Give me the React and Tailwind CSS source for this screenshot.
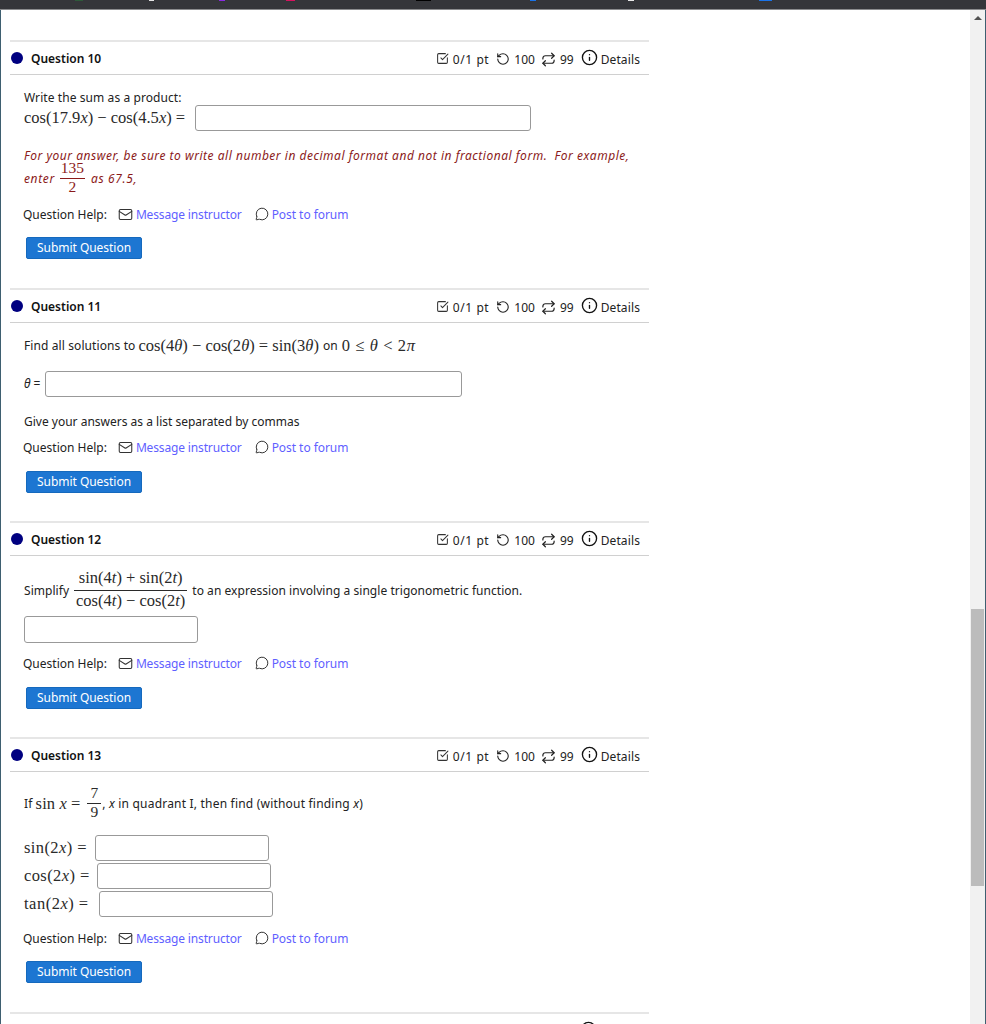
import React from "react";
import { SquareCheckBig, RotateCcw, Repeat, Info, Mail, MessageCircle } from "lucide-react";

const M = ({ children, className = "" }) => (
  <span className={`whitespace-nowrap font-['Liberation_Serif',serif] text-[16.5px] text-[#2a2a2a] ${className}`}>{children}</span>
);
const V = ({ children }) => <i className="font-['Liberation_Serif',serif]">{children}</i>;

const Frac = ({ top, bottom, size = "text-[15.5px]", numClass = "px-[1px] pb-[3px]", denClass = "px-[1px] pt-[1px]", className = "" }) => (
  <span className={`inline-flex flex-col items-center whitespace-nowrap font-['Liberation_Serif',serif] ${size} leading-[14px] ${className}`}>
    <span className={numClass}>{top}</span>
    <span className={`w-full border-t border-current text-center ${denClass}`}>{bottom}</span>
  </span>
);

const Field = ({ className }) => (
  <div className={`h-[26px] rounded-[3px] border border-[#999] bg-white ${className}`} />
);

const Help = ({ className = "" }) => (
  <div className={`flex h-5 items-center pl-[13px] text-[12px] ${className}`}>
    <span className="text-[#222]">Question Help:</span>
    <Mail size={15} strokeWidth={1.7} className="ml-[11px] -mt-[2px] text-[#333]" />
    <a className="ml-[3px] tracking-[-0.15px] text-[#5f5fff]">Message instructor</a>
    <MessageCircle size={14} strokeWidth={1.7} className="ml-[13px] -mt-[2px] text-[#333]" />
    <a className="ml-[3px] tracking-[-0.05px] text-[#5f5fff]">Post to forum</a>
  </div>
);

const Submit = ({ className = "" }) => (
  <div className={`ml-[16px] flex h-[22px] w-[116px] items-center justify-center rounded-[2px] border border-[#1569bd] bg-[#1d76d2] text-[12px] tracking-[-0.03px] text-white ${className}`}>
    Submit Question
  </div>
);

const Header = ({ n }) => (
  <div className="flex h-[35px] items-center border-t-2 border-b border-t-[#e6e6e6] border-b-[#d0d0d0] text-[12px] text-[#222]">
    <span className="ml-[1px] h-[12px] w-[12px] rounded-full bg-[#000080]" />
    <span className="ml-[8px] mt-[1px] font-semibold text-[#111]">Question {n}</span>
    <div className="ml-auto flex items-center pr-[9px]">
      <SquareCheckBig size={13} strokeWidth={1.9} className="mt-[1px] text-[#333]" />
      <span className="ml-[4px] mt-[3px] tracking-[0.6px]">0/1 pt</span>
      <RotateCcw size={14} strokeWidth={1.9} className="ml-[7px] mt-[1px] text-[#222]" />
      <span className="ml-[4px] mt-[3px]">100</span>
      <Repeat size={15} strokeWidth={1.9} className="ml-[6px] mt-[2px] text-[#222]" />
      <span className="ml-[4px] mt-[3px]">99</span>
      <Info size={17} strokeWidth={1.9} className="ml-[7px] -mt-[2px] text-[#111]" />
      <span className="ml-[3px] mt-[4px] tracking-[0.12px]">Details</span>
    </div>
  </div>
);

export default function App() {
  return (
    <div className="flex h-[1024px] w-[986px] flex-col overflow-hidden bg-white font-['Noto_Sans','Open_Sans',sans-serif] text-[12px] text-[#222]">
      <div className="relative h-[10px] shrink-0 border-b border-[#8b8c8e] bg-[#35363a]">
        <span className="absolute left-[75px] top-0 h-[1px] w-[8px] bg-[#2e5a3a]" />
        <span className="absolute left-[149px] top-0 h-[1px] w-[5px] bg-[#e4e4e4]" />
        <span className="absolute left-[219px] top-0 h-[1px] w-[6px] bg-[#8a2be2]" />
        <span className="absolute left-[286px] top-0 h-[1px] w-[9px] bg-[#d6135f]" />
        <span className="absolute left-[416px] top-0 h-[1px] w-[15px] bg-black" />
        <span className="absolute left-[530px] top-0 h-[1px] w-[6px] bg-[#1a73e8]" />
        <span className="absolute left-[628px] top-0 h-[1px] w-[6px] bg-[#e8e8e8]" />
        <span className="absolute left-[759px] top-0 h-[1px] w-[13px] bg-[#1a73e8]" />
      </div>
      <div className="flex min-h-0 flex-1">
        <div className="w-[1px] shrink-0 bg-[#3e5f70]" />
        <main className="min-w-0 flex-1 pl-[9px] pt-[30px]">
          <div className="w-[639px]">
            {/* Question 10 */}
            <Header n={10} />
            <div className="pb-[29px] pt-[15px]">
              <div className="flex h-4 items-center pl-[14px] tracking-[0.08px]">Write the sum as a product:</div>
              <div className="-mt-[1px] flex h-[26px] items-center pl-[14px]">
                <M className="w-[171px]">cos(17.9<V>x</V>) − cos(4.5<V>x</V>) =</M>
                <Field className="w-[336px]" />
              </div>
              <div className="mt-[18px] flex h-[14px] items-center whitespace-nowrap pl-[14px] italic tracking-[0.52px] text-[#8b1a1a]">
                For your answer, be sure to write all number in decimal format and not in fractional form.&nbsp; For example,
              </div>
              <div className="flex h-[32px] items-center pl-[14px] italic tracking-[0.62px] text-[#8b1a1a]">
                enter
                <Frac top="135" bottom="2" className="ml-[5px] mr-[6px] -mt-[4px] not-italic tracking-normal" />
                as 67.5,
              </div>
              <Help className="mt-[10px]" />
              <Submit className="mt-[12px]" />
            </div>

            {/* Question 11 */}
            <Header n={11} />
            <div className="pb-[28px] pt-[15px]">
              <div className="flex h-4 items-center pl-[14px] tracking-[0.1px]">
                <span>Find all solutions to</span>
                <M className="ml-[3px] tracking-normal">cos(4<V>θ</V>) − cos(2<V>θ</V>) = sin(3<V>θ</V>)</M>
                <span className="ml-[4px]">on</span>
                <M className="ml-[4px] tracking-[0.6px]">0 ≤ <V>θ</V> &lt; 2<V>π</V></M>
              </div>
              <div className="mt-[17px] flex h-[26px] items-center pl-[14px]">
                <span className="w-[21px]"><i>θ</i>&nbsp;=</span>
                <Field className="w-[417px]" />
              </div>
              <div className="mt-[17px] flex h-4 items-center pl-[14px]">Give your answers as a list separated by commas</div>
              <Help className="mt-[8px]" />
              <Submit className="mt-[13px]" />
            </div>

            {/* Question 12 */}
            <Header n={12} />
            <div className="pb-[28px] pt-[12px]">
              <div className="flex h-[45px] items-center pl-[14px] tracking-[0.04px]">
                Simplify
                <Frac
                  top={<>sin(4<V>t</V>) + sin(2<V>t</V>)</>}
                  bottom={<>cos(4<V>t</V>) − cos(2<V>t</V>)</>}
                  size="text-[16.5px]"
                  numClass="px-[2px] pb-[5px]"
                  denClass="px-[2px] pt-[3px]"
                  className="ml-[5px] mr-[5px] -mt-[2px] tracking-normal text-[#2a2a2a]"
                />
                to an expression involving a single trigonometric function.
              </div>
              <Field className="ml-[14px] mt-[3px] h-[27px] w-[174px]" />
              <Help className="mt-[11px]" />
              <Submit className="mt-[13px]" />
            </div>

            {/* Question 13 */}
            <Header n={13} />
            <div className="pb-[29px] pt-[14px]">
              <div className="flex h-[36px] items-center pl-[14px] tracking-[0.2px]">
                <span>If</span>
                <M className="ml-[3px] tracking-[0.1px]">sin <V>x</V> =</M>
                <Frac top="7" bottom="9" numClass="px-[3px] pb-[3px]" className="ml-[7px] mr-[1px] -mt-[4px] tracking-normal text-[#2a2a2a]" />
                <span>,&nbsp;<i>x</i>&nbsp;in quadrant I, then find (without finding&nbsp;<i>x</i>)</span>
              </div>
              <div className="mt-[13px] flex h-[26px] items-center pl-[14px]">
                <M className="w-[71px] tracking-[0.4px]">sin(2<V>x</V>) =</M>
                <Field className="w-[174px]" />
              </div>
              <div className="mt-[2px] flex h-[26px] items-center pl-[14px]">
                <M className="w-[73px] tracking-[0.4px]">cos(2<V>x</V>) =</M>
                <Field className="w-[174px]" />
              </div>
              <div className="mt-[2px] flex h-[26px] items-center pl-[14px]">
                <M className="w-[75px] tracking-[0.5px]">tan(2<V>x</V>) =</M>
                <Field className="w-[174px]" />
              </div>
              <Help className="mt-[12px]" />
              <Submit className="mt-[12px]" />
            </div>

            {/* Next question, only the top of its details icon shows */}
            <div className="flex justify-end border-t-2 border-t-[#e6e6e6] pr-[52px] pt-[7px]">
              <Info size={17} strokeWidth={1.9} className="text-[#111]" />
            </div>
          </div>
        </main>
        <aside className="flex w-[15px] shrink-0 flex-col items-center bg-[#f1f1f1]">
          <span className="mt-[6px] h-0 w-0 border-x-[4px] border-b-[4px] border-x-transparent border-b-[#505050]" />
          <span className="mt-[589px] h-[277px] w-[13px] bg-[#bcbcbc]" />
        </aside>
        <div className="w-[1px] shrink-0 bg-[#3e5f70]" />
      </div>
    </div>
  );
}
